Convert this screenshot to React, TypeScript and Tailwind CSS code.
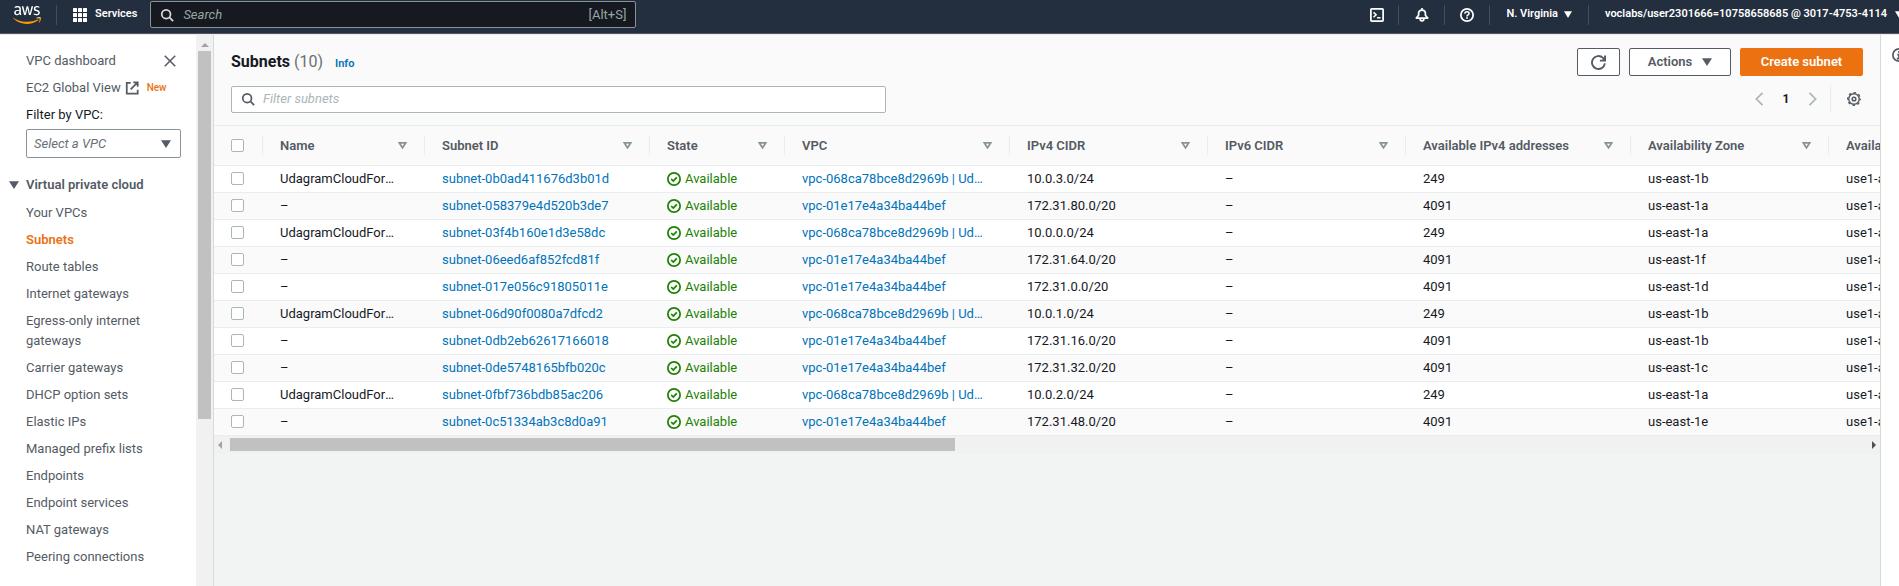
import type { ReactNode } from "react";
import { FaAws } from "react-icons/fa";

const navLinks = [
  "Your VPCs",
  "Subnets",
  "Route tables",
  "Internet gateways",
  "Egress-only internet gateways",
  "Carrier gateways",
  "DHCP option sets",
  "Elastic IPs",
  "Managed prefix lists",
  "Endpoints",
  "Endpoint services",
  "NAT gateways",
  "Peering connections",
];

const columns = [
  { label: "Name", width: 162 },
  { label: "Subnet ID", width: 225 },
  { label: "State", width: 135 },
  { label: "VPC", width: 225 },
  { label: "IPv4 CIDR", width: 198 },
  { label: "IPv6 CIDR", width: 198 },
  { label: "Available IPv4 addresses", width: 225 },
  { label: "Availability Zone", width: 198 },
  { label: "Availability Zone ID", width: 198 },
];

const NAMED = "UdagramCloudFormation";
const VPC_A = "vpc-068ca78bce8d2969b | Udagram";
const VPC_B = "vpc-01e17e4a34ba44bef";

const subnets = [
  { name: NAMED, id: "subnet-0b0ad411676d3b01d", vpc: VPC_A, cidr: "10.0.3.0/24", free: 249, zone: "us-east-1b", zoneId: "use1-az2" },
  { name: "–", id: "subnet-058379e4d520b3de7", vpc: VPC_B, cidr: "172.31.80.0/20", free: 4091, zone: "us-east-1a", zoneId: "use1-az1" },
  { name: NAMED, id: "subnet-03f4b160e1d3e58dc", vpc: VPC_A, cidr: "10.0.0.0/24", free: 249, zone: "us-east-1a", zoneId: "use1-az1" },
  { name: "–", id: "subnet-06eed6af852fcd81f", vpc: VPC_B, cidr: "172.31.64.0/20", free: 4091, zone: "us-east-1f", zoneId: "use1-az5" },
  { name: "–", id: "subnet-017e056c91805011e", vpc: VPC_B, cidr: "172.31.0.0/20", free: 4091, zone: "us-east-1d", zoneId: "use1-az6" },
  { name: NAMED, id: "subnet-06d90f0080a7dfcd2", vpc: VPC_A, cidr: "10.0.1.0/24", free: 249, zone: "us-east-1b", zoneId: "use1-az2" },
  { name: "–", id: "subnet-0db2eb62617166018", vpc: VPC_B, cidr: "172.31.16.0/20", free: 4091, zone: "us-east-1b", zoneId: "use1-az2" },
  { name: "–", id: "subnet-0de5748165bfb020c", vpc: VPC_B, cidr: "172.31.32.0/20", free: 4091, zone: "us-east-1c", zoneId: "use1-az4" },
  { name: NAMED, id: "subnet-0fbf736bdb85ac206", vpc: VPC_A, cidr: "10.0.2.0/24", free: 249, zone: "us-east-1a", zoneId: "use1-az1" },
  { name: "–", id: "subnet-0c51334ab3c8d0a91", vpc: VPC_B, cidr: "172.31.48.0/20", free: 4091, zone: "us-east-1e", zoneId: "use1-az3" },
];

function Icon({ className, children }: { className: string; children: ReactNode }) {
  return (
    <svg viewBox="0 0 16 16" fill="none" stroke="currentColor" strokeWidth="2" aria-hidden="true" className={`shrink-0 ${className}`}>
      {children}
    </svg>
  );
}

function Caret({ className }: { className: string }) {
  return (
    <svg viewBox="0 0 10 9" fill="currentColor" aria-hidden="true" preserveAspectRatio="none" className={`shrink-0 ${className}`}>
      <path d="M0 0.4H10L5 9z" />
    </svg>
  );
}

function SearchIcon({ className }: { className: string }) {
  return (
    <Icon className={className}>
      <circle cx="7" cy="7" r="5" />
      <path d="M10.8 10.8 15 15" />
    </Icon>
  );
}

function AwsLogo() {
  return (
    <a href="#home" aria-label="AWS home" className="flex">
      <svg className="absolute size-0" aria-hidden="true">
        <defs>
          <linearGradient id="aws-fill" gradientUnits="userSpaceOnUse" x1="0" y1="0" x2="0" y2="512">
            <stop offset="0.61" stopColor="#ffffff" />
            <stop offset="0.61" stopColor="#ff9900" />
          </linearGradient>
        </defs>
      </svg>
      <FaAws className="h-6 w-7 fill-[url(#aws-fill)]" preserveAspectRatio="none" />
    </a>
  );
}

function TopBar() {
  return (
    <header className="flex h-[34px] items-center justify-between overflow-hidden border-b border-[#595263] bg-[#232f3e] pb-1 text-[11px] font-semibold text-white">
      <div className="flex items-center">
        <div className="flex h-5 items-center border-r border-[#414d5c] pr-[15px] pl-[13px]">
          <AwsLogo />
        </div>
        <button type="button" className="ml-4 flex items-center gap-2">
          <svg viewBox="0 0 14 14" fill="currentColor" aria-hidden="true" className="size-3.5">
            {[0, 5, 10].map((y) => [0, 5, 10].map((x) => <rect key={`${x}-${y}`} x={x} y={y} width="4" height="4" rx="0.6" />))}
          </svg>
          Services
        </button>
        <label className="ml-[13px] flex h-[27px] w-[486px] items-center gap-[9px] rounded-xs border border-[#879596] bg-[#16191f] px-[9px] text-[13px] font-normal text-[#95a5a6]">
          <SearchIcon className="size-3.5 text-[#d5dbdb]" />
          <input type="search" aria-label="Search" placeholder="Search" className="min-w-0 flex-1 bg-transparent placeholder:text-[#95a5a6] placeholder:italic focus:outline-none" />
          [Alt+S]
        </label>
      </div>
      <nav className="-mr-1 flex items-center">
        <button type="button" aria-label="CloudShell" className="flex h-5 w-[29px] items-center border-r border-[#414d5c]">
          <Icon className="size-3.5">
            <rect x="1" y="1" width="14" height="14" rx="1" />
            <path d="M4 5l3 2.8L4 10.6M8 11.2h4" strokeWidth="1.7" />
          </Icon>
        </button>
        <button type="button" aria-label="Notifications" className="flex h-5 w-[46px] items-center justify-center border-r border-[#414d5c]">
          <Icon className="size-3.5">
            <path d="M1.500 11.500 4.100 8.300V6.500C4.100 3.800 5.700 2.300 8 2.300s3.900 1.500 3.900 4.200v1.800l2.600 3.200z" strokeLinejoin="round" />
            <path d="M8 0v2M5.900 11.500v1.200a2.100 2.100 0 0 0 4.200 0v-1.200" />
          </Icon>
        </button>
        <button type="button" aria-label="Help" className="flex h-5 w-[45px] items-center justify-center border-r border-[#414d5c]">
          <Icon className="size-3.5">
            <circle cx="8" cy="8" r="7" />
            <path d="M5.600 6.500C5.600 5 6.600 4.300 8 4.300s2.400.8 2.400 2C10.400 7.900 8 8 8 9.600" strokeWidth="1.700" />
            <path d="M8 10.600v1.800" />
          </Icon>
        </button>
        <button type="button" className="flex h-5 items-center gap-1.5 border-r border-[#414d5c] px-4">
          N. Virginia
          <Caret className="h-[7px] w-2" />
        </button>
        <button type="button" className="flex h-5 items-center gap-2 pl-4">
          voclabs/user2301666=10758658685 @ 3017-4753-4114
          <Caret className="h-[7px] w-2" />
        </button>
      </nav>
    </header>
  );
}

function Sidebar() {
  return (
    <aside className="flex w-[213px] shrink-0 bg-white text-[13px] leading-5 text-[#545b64]">
      <nav aria-label="VPC" className="min-w-0 flex-1 pt-4">
        <div className="pr-4 pl-[26px]">
          <div className="flex items-center justify-between">
            <a href="#dashboard">VPC dashboard</a>
            <button type="button" aria-label="Close navigation" className="mr-1">
              <Icon className="size-3">
                <path d="M1 1l14 14M15 1L1 15" />
              </Icon>
            </button>
          </div>
          <div className="mt-[7px] flex items-center">
            <a href="#global" className="flex items-center gap-1">
              EC2 Global View
              <Icon className="size-3.5">
                <path d="M6.500 2H2v12.500h12.500V10M9.500 1.500h5v5M14.300 1.700L6.500 9.500" />
              </Icon>
            </a>
            <span className="ml-2 text-[10px] font-medium text-[#ec7211]">New</span>
          </div>
          <label htmlFor="vpc-filter" className="mt-[7px] block text-[#16191f]">
            Filter by VPC:
          </label>
          <div className="mt-1 grid items-center">
            <select id="vpc-filter" className="col-start-1 row-start-1 h-[29px] w-[155px] appearance-none rounded-xs border border-[#879596] bg-white px-[7px] text-[13px] text-[#687078] italic">
              <option>Select a VPC</option>
            </select>
            <Caret className="pointer-events-none col-start-1 row-start-1 ml-[135px] h-2 w-2.5" />
          </div>
        </div>
        <button type="button" className="mt-[17px] flex items-center gap-[7px] pl-[9px] font-semibold">
          <Caret className="h-2 w-2.5" />
          Virtual private cloud
        </button>
        <ul className="mt-2 flex flex-col gap-[7px] pr-10 pb-5 pl-[26px]">
          {navLinks.map((link) => (
            <li key={link}>
              <a href={`#${link}`} className={link === "Subnets" ? "block font-semibold text-[#ec7211]" : "block"}>
                {link}
              </a>
            </li>
          ))}
        </ul>
      </nav>
      <div className="flex w-[17px] flex-col items-center bg-[#f1f1f1]">
        <svg viewBox="0 0 8 4" aria-hidden="true" className="mt-2 h-1 w-2 fill-[#a3a3a3]">
          <path d="M4 0l4 4H0z" />
        </svg>
        <div className="mt-1 h-[368px] w-[13px] bg-[#c1c1c1]" />
      </div>
    </aside>
  );
}

function Checkbox({ label }: { label: string }) {
  return <input type="checkbox" aria-label={label} className="block size-[13px] appearance-none rounded-xs border border-[#aab7b8] bg-white" />;
}

function Toolbar() {
  return (
    <div className="bg-[#fafafa] pr-[17px] pb-3 pl-[17px]">
      <div className="flex items-center justify-between pt-[13px]">
        <div className="flex items-baseline">
          <h1 className="text-base font-bold text-[#16191f]">
            Subnets <span className="font-normal text-[#687078]">(10)</span>
          </h1>
          <a href="#info" className="ml-3 text-[11px] font-semibold text-[#0073bb]">
            Info
          </a>
        </div>
        <div className="flex gap-[9px] text-[13px] font-semibold text-[#545b64]">
          <button type="button" aria-label="Refresh" className="flex h-7 w-[43px] items-center justify-center rounded-xs border border-[#545b64] bg-white">
            <Icon className="size-[15px]">
              <path d="M14.800 9A6.900 6.900 0 1 1 12.800 3.100L14 4.300M15 .5v5.500H9.500" />
              <path d="M15 2v4h-4z" fill="currentColor" stroke="none" />
            </Icon>
          </button>
          <button type="button" className="flex h-7 w-[102px] items-center justify-center gap-2.5 rounded-xs border border-[#545b64] bg-white">
            Actions
            <Caret className="h-2 w-2.5" />
          </button>
          <button type="button" className="h-7 w-[123px] rounded-xs bg-[#ec7211] text-white">
            Create subnet
          </button>
        </div>
      </div>
      <div className="mt-[9px] flex items-center justify-between">
        <label className="flex h-[27px] w-[655px] items-center gap-2 rounded-xs border border-[#aab7b8] bg-white px-[9px] text-[#545b64]">
          <SearchIcon className="size-3.5" />
          <input type="search" aria-label="Filter subnets" placeholder="Filter subnets" className="min-w-0 flex-1 text-[13px] placeholder:text-[#aab7b8] placeholder:italic focus:outline-none" />
        </label>
        <div className="flex items-center text-[#aab7b8]">
          <button type="button" aria-label="Previous page">
            <Icon className="size-3.5">
              <path d="M12 1L5 8l7 7" />
            </Icon>
          </button>
          <span className="w-10 text-center text-xs font-bold text-[#16191f]">1</span>
          <button type="button" aria-label="Next page">
            <Icon className="size-3.5">
              <path d="M4 1l7 7-7 7" />
            </Icon>
          </button>
          <button type="button" aria-label="Preferences" className="ml-2.5 flex h-7 items-center border-l border-[#eaeded] pr-0.5 pl-4 text-[#545b64]">
            <Icon className="size-3.5">
              <circle cx="8" cy="8" r="2.100" strokeWidth="1.700" />
              <circle cx="8" cy="8" r="6" strokeWidth="1.600" />
              <circle cx="8" cy="8" r="7.200" strokeWidth="1.600" strokeDasharray="2.830 2.825" strokeDashoffset="1.400" />
            </Icon>
          </button>
        </div>
      </div>
    </div>
  );
}

function SubnetTable() {
  return (
    <div className="overflow-hidden border-t border-[#eaeded]">
      <table className="w-[1813px] table-fixed text-[13px] text-[#16191f]">
        <colgroup>
          <col className="w-[49px]" />
          {columns.map((c) => (
            <col key={c.label} style={{ width: c.width }} />
          ))}
        </colgroup>
        <thead>
          <tr className="h-[39px] border-b border-[#eaeded] bg-[#fafafa] text-left text-[#545b64]">
            <th className="p-0">
              <div className="flex h-[19px] items-center border-r border-[#eaeded] pl-[17px]">
                <Checkbox label="Select all subnets" />
              </div>
            </th>
            {columns.map((c) => (
              <th key={c.label} className="p-0 font-semibold">
                <div className="flex h-[19px] items-center justify-between border-r border-[#eaeded] pr-[17px] pl-[17px] leading-[19px] whitespace-nowrap">
                  {c.label}
                  <svg viewBox="0 0 10 8" fill="none" stroke="#879596" strokeWidth="2" aria-hidden="true" className="h-[7px] w-[9px] shrink-0">
                    <path d="M1.400 1h7.200L5 6.600z" />
                  </svg>
                </div>
              </th>
            ))}
          </tr>
        </thead>
        <tbody className="[&_td]:truncate [&_td]:py-0 [&_td]:pr-6 [&_td]:pl-[17px] [&_td]:leading-[26px] [&_td:first-child]:pr-0">
          {subnets.map((s) => (
            <tr key={s.id} className="h-[27px] border-b border-[#eaeded] bg-white even:bg-[#fafafa]">
              <td>
                <Checkbox label={`Select ${s.id}`} />
              </td>
              <td>{s.name}</td>
              <td>
                <a href={`#${s.id}`} className="text-[#0073bb]">
                  {s.id}
                </a>
              </td>
              <td>
                <span className="flex items-center gap-1 text-[#1d8102]">
                  <Icon className="size-3.5">
                    <circle cx="8" cy="8" r="7" />
                    <path d="M4.800 8l2.400 2.400 4-4.200" />
                  </Icon>
                  Available
                </span>
              </td>
              <td className="text-[#0073bb]">
                <a href={`#${s.vpc}`}>{s.vpc}</a>
              </td>
              <td>{s.cidr}</td>
              <td>–</td>
              <td>{s.free}</td>
              <td>{s.zone}</td>
              <td>{s.zoneId}</td>
            </tr>
          ))}
        </tbody>
      </table>
      <div className="flex h-[18px] items-center bg-[#f1f1f1] px-1">
        <svg viewBox="0 0 4 8" aria-hidden="true" className="h-2 w-1 fill-[#a3a3a3]">
          <path d="M4 0v8L0 4z" />
        </svg>
        <div className="mr-auto ml-2 h-[13px] w-[725px] bg-[#c1c1c1]" />
        <svg viewBox="0 0 4 8" aria-hidden="true" className="h-2 w-1 fill-[#505050]">
          <path d="M0 0v8l4-4z" />
        </svg>
      </div>
    </div>
  );
}

export default function App() {
  return (
    <div className="flex h-screen flex-col overflow-hidden font-[Roboto,sans-serif]">
      <TopBar />
      <div className="flex min-h-0 flex-1 border-t border-[#eaeded]">
        <Sidebar />
        <main className="min-w-0 flex-1 border-x border-[#d5dbdb] bg-[#f2f3f3]">
          <Toolbar />
          <SubnetTable />
        </main>
        <aside className="w-[18px] shrink-0 overflow-hidden bg-white pt-2.5 pl-[11px] text-[#545b64]">
          <button type="button" aria-label="Open help panel">
            <Icon className="size-3.5">
              <circle cx="8" cy="8" r="7" />
              <path d="M8 3.500v2M6 7.500h2v4M5.500 12h5" />
            </Icon>
          </button>
        </aside>
      </div>
    </div>
  );
}
